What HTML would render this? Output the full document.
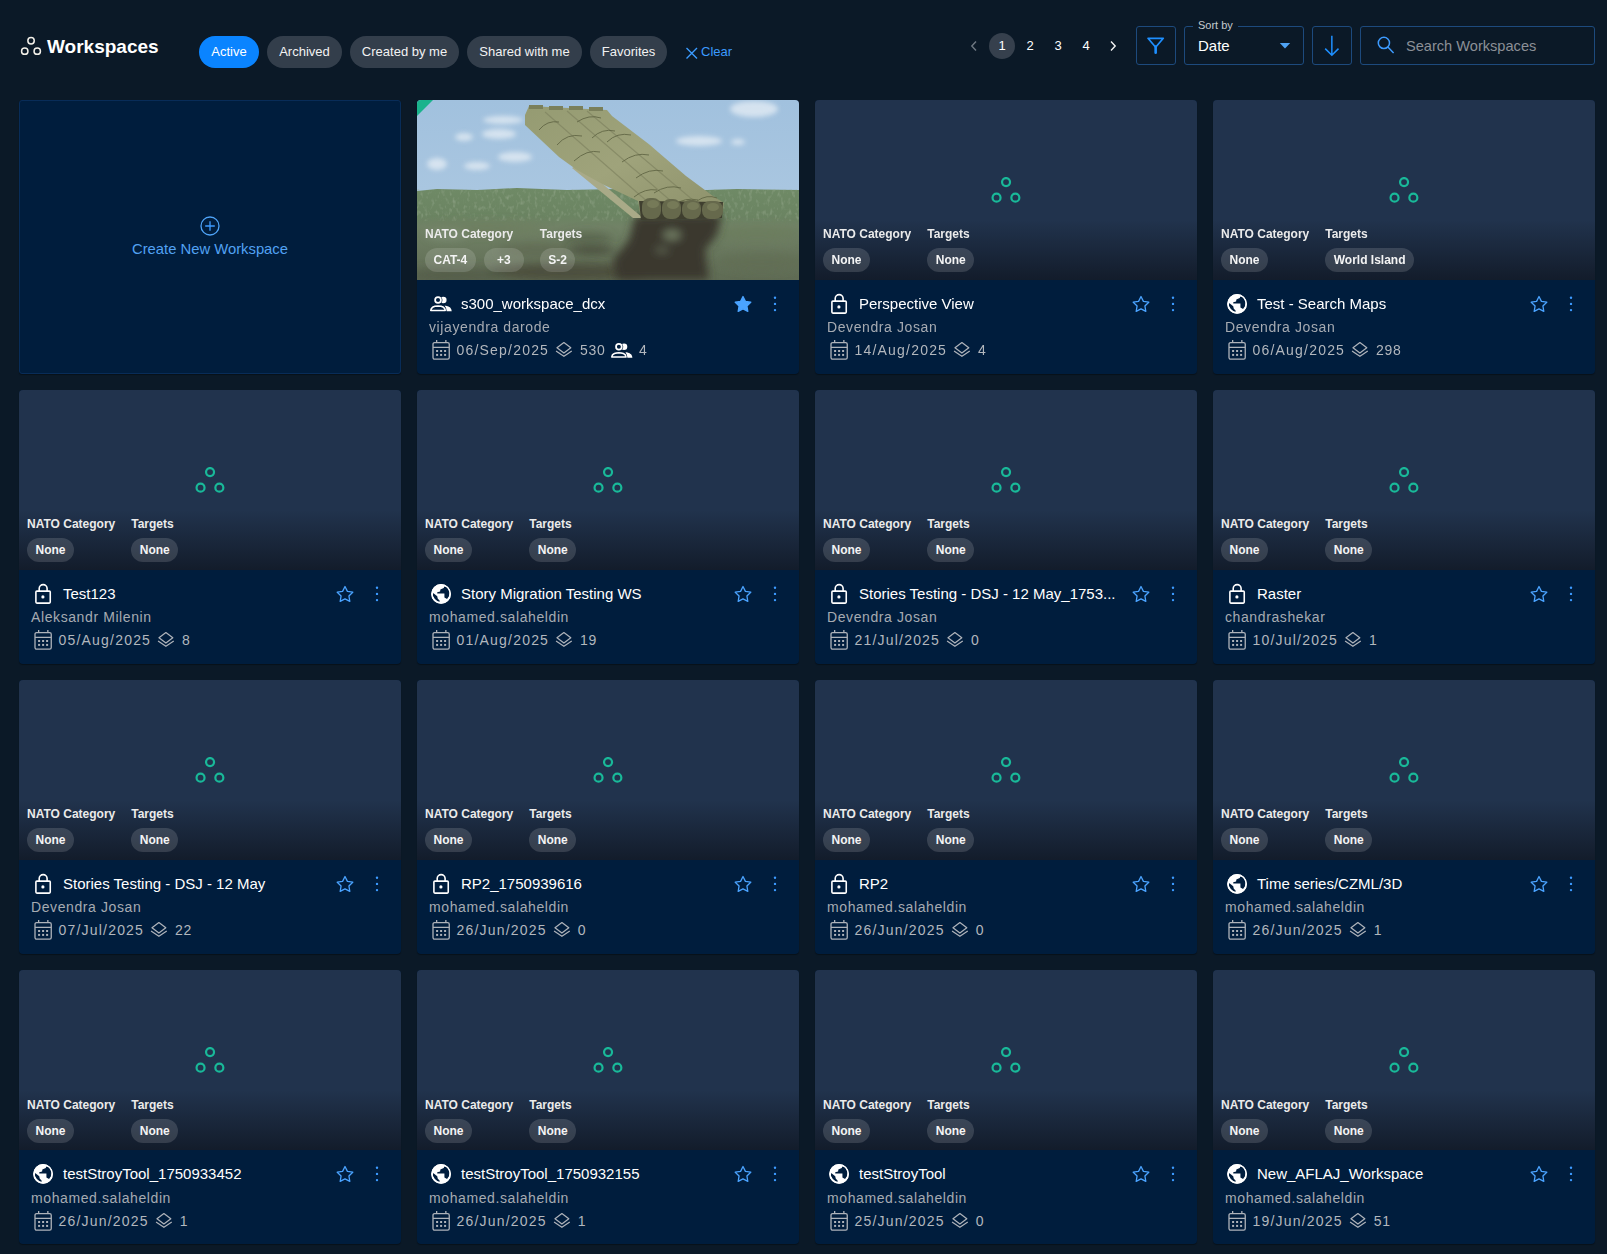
<!DOCTYPE html>
<html><head><meta charset="utf-8"><title>Workspaces</title>
<style>
html,body{margin:0;padding:0;}
body{width:1607px;height:1254px;overflow:hidden;background:#0b1927;font-family:"Liberation Sans",sans-serif;position:relative;color:#fff;}
.abs{position:absolute;}
/* header */
.logo{position:absolute;left:19px;top:35px;}
.h1{position:absolute;left:47px;top:35.5px;font-size:19px;font-weight:700;color:#fff;line-height:22px;}
.fchip{position:absolute;top:36px;height:32px;border-radius:16px;background:#333e4b;color:#f2f2f2;font-size:13px;line-height:32px;text-align:center;}
.fchip.on{background:#0a84ff;color:#fff;}
.clear{position:absolute;left:684px;top:36px;height:32px;line-height:32px;color:#3b9bff;font-size:13px;}
.clear svg{position:absolute;left:1px;top:9.5px;}
.clear span{position:absolute;left:17px;top:0;}
.pg{position:absolute;top:33px;width:26px;height:26px;line-height:26px;text-align:center;font-size:13px;color:#fff;border-radius:13px;}
.pg.cur{background:#36404d;}
.obtn{position:absolute;top:26px;height:39px;border:1px solid #1d4a7d;border-radius:3px;box-sizing:border-box;}
.sortlbl{position:absolute;left:1193px;top:18px;padding:0 5px;background:#0b1927;font-size:11px;color:#c5c9ce;line-height:14px;}
.sortval{position:absolute;left:1198px;top:37px;font-size:15px;color:#fff;line-height:18px;}
.search-ph{position:absolute;left:1406px;top:37px;font-size:14.6px;color:#8c9097;line-height:18px;}
/* cards */
.card{position:absolute;width:382px;height:274px;border-radius:4px;overflow:hidden;background:#001d3d;}
.card.create{box-sizing:border-box;border:1px solid #082c58;background:#001d3d;border-radius:3px;}
.plus{position:absolute;left:179px;top:114px;}
.ctext{position:absolute;left:0;width:380px;top:139px;text-align:center;font-size:14.8px;color:#52a2f3;line-height:18px;}
.img{position:absolute;left:0;top:0;width:382px;height:180px;background:#21334d;overflow:hidden;}
.img .shade{position:absolute;left:0;right:0;bottom:0;height:60px;background:linear-gradient(to bottom,rgba(10,14,22,0) 0%,rgba(10,14,22,0.62) 100%);}
.ph{position:absolute;left:176px;top:77px;}
.ph circle{fill:none;stroke:#19b999;stroke-width:2.2;}
.meta{position:absolute;left:8px;top:126px;display:flex;gap:16px;z-index:2;}
.col{display:flex;flex-direction:column;}
.lbl{font-size:12px;font-weight:700;color:#ebebeb;line-height:17px;height:22px;}
.chips{display:flex;gap:8px;}
.chip{height:24px;line-height:25px;padding:0 8.5px;border-radius:12px;background:rgba(255,255,255,0.14);font-size:12px;font-weight:700;color:#f4f4f4;white-space:nowrap;}
.photo .chip{background:rgba(255,255,255,0.18);}
.info{position:absolute;left:0;top:0;width:382px;height:274px;}
.ic{position:absolute;}
.ttl-ic{left:14px;top:192px;}
.title{position:absolute;left:44px;top:195px;font-size:15px;line-height:18px;color:#fff;white-space:nowrap;}
.star{position:absolute;left:316px;top:194px;}
.kebab{position:absolute;left:355px;top:195px;}
.owner{position:absolute;left:12px;top:218px;font-size:14px;line-height:18px;color:#a6abb2;letter-spacing:0.6px;white-space:nowrap;}
.drow{position:absolute;left:15px;top:241px;height:22px;display:flex;align-items:flex-start;line-height:18px;white-space:nowrap;color:#b2b7bd;font-size:14px;}
.drow .ic{position:static;}
.date{letter-spacing:1.2px;margin-left:4.5px;}
.cal{margin-top:-2px;}
.lay{margin-left:6px;margin-top:-0.75px;}
.cnt{margin-left:7px;letter-spacing:0.6px;}
.ppl2{margin-left:5px;margin-top:0.5px;}
.cnt2{margin-left:5px !important;}

.r4 .meta{top:127px;}
.r4 .owner{top:219px;}
.r4 .drow{top:242px;}
.card{box-shadow:0 1px 1px rgba(0,0,0,0.35);}

</style></head><body>
<svg width="0" height="0" style="position:absolute">
<defs>
<symbol id="cal" viewBox="0 0 20 22"><g fill="none" stroke="#aeb3ba" stroke-width="1.3"><rect x="1.0" y="3.55" width="16.25" height="16.6" rx="1.6"/><path d="M4.65 0.9V3.5M13.85 0.9V3.5M1 8.4H17.25"/></g><g fill="#aeb3ba"><rect x="4.1" y="11" width="2" height="2"/><rect x="8.1" y="11" width="2" height="2"/><rect x="12.1" y="11" width="2" height="2"/><rect x="4.1" y="14.9" width="2" height="2"/><rect x="8.1" y="14.9" width="2" height="2"/><rect x="12.1" y="14.9" width="2" height="2"/></g></symbol>
<symbol id="layers" viewBox="0 0 19 18"><g fill="none" stroke="#aeb3ba" stroke-width="1.3" stroke-linejoin="round"><path d="M2.1 7.6L9.4 2.2L16.7 7.6L9.4 13.3Z"/><path d="M1.1 11.2L9.4 16.7L17.7 11.2"/></g></symbol>
<symbol id="lock" viewBox="0 0 20 22"><g fill="none" stroke="#fff" stroke-width="1.6"><rect x="1.9" y="9.1" width="14.35" height="12" rx="1"/><path d="M5.2 9.1V6.55A3.95 3.95 0 0 1 13.1 6.55V9.1"/></g><circle cx="8.9" cy="14.9" r="1.6" fill="#fff"/></symbol>
<symbol id="globe" viewBox="0 0 1254 1254"><circle cx="630" cy="665" r="410" fill="#fff"/><g fill="#001d3d"><path d="M770 360L740 420L600 480L590 560L470 600L470 650L770 650L770 820L880 880L960 760L980 620L930 460L850 380Z"/><path d="M300 630L470 760L490 860L580 960L560 990L470 960L360 870L290 740Z"/></g><circle cx="630" cy="665" r="385" fill="none" stroke="#fff" stroke-width="55"/></symbol>
<symbol id="people" viewBox="180 300 950 700"><circle cx="745" cy="495" r="130" fill="#fff"/><circle cx="537" cy="495" r="175" fill="#001d3d"/><circle cx="537" cy="495" r="115" fill="none" stroke="#fff" stroke-width="70"/><path d="M850 715Q1070 750 1080 935L880 935Q870 790 800 720Z" fill="#fff"/><path d="M250 905Q265 735 537 730Q810 735 825 905Z" fill="none" stroke="#fff" stroke-width="62" stroke-linejoin="round"/></symbol>
<symbol id="staro" viewBox="0 0 20 20"><path id="starp" d="M10.00 2.50L12.41 7.38L17.80 8.17L13.90 11.97L14.82 17.33L10.00 14.80L5.18 17.33L6.10 11.97L2.20 8.17L7.59 7.38Z" fill="none" stroke="#4aa3ff" stroke-width="1.3" stroke-linejoin="round"/></symbol>
<symbol id="starf" viewBox="0 0 20 20"><path d="M10.00 2.50L12.41 7.38L17.80 8.17L13.90 11.97L14.82 17.33L10.00 14.80L5.18 17.33L6.10 11.97L2.20 8.17L7.59 7.38Z" fill="#4aa3ff" stroke="#4aa3ff" stroke-width="1.3" stroke-linejoin="round"/></symbol>
<symbol id="kebab" viewBox="0 0 6 18"><g fill="#3d9bff"><circle cx="3" cy="2.8" r="1.2"/><circle cx="3" cy="8.9" r="1.2"/><circle cx="3" cy="15.1" r="1.2"/></g></symbol>
</defs></svg>

<svg class="logo" width="24" height="22" viewBox="19 35 24 22"><g fill="none" stroke="#f2efe8" stroke-width="1.5"><circle cx="31.05" cy="40.8" r="3.2"/><circle cx="24.75" cy="51.15" r="3.2"/><circle cx="37.25" cy="51.15" r="3.2"/></g></svg>
<div class="h1">Workspaces</div>
<div class="fchip on" style="left:199px;width:60px">Active</div>
<div class="fchip" style="left:267px;width:75px">Archived</div>
<div class="fchip" style="left:350px;width:109px">Created by me</div>
<div class="fchip" style="left:467px;width:115px">Shared with me</div>
<div class="fchip" style="left:590px;width:77px">Favorites</div>
<div class="clear"><svg width="14" height="14" viewBox="0 0 14 14"><path d="M1.5 2L12 12.5M12 2L1.5 12.5" stroke="#3b9bff" stroke-width="1.4"/></svg><span>Clear</span></div>
<svg class="abs" style="left:968px;top:39px" width="12" height="14" viewBox="0 0 12 14"><path d="M8 2.5L3.8 7L8 11.5" fill="none" stroke="#6f7882" stroke-width="1.4"/></svg>
<div class="pg cur" style="left:989px">1</div>
<div class="pg" style="left:1017px">2</div>
<div class="pg" style="left:1045px">3</div>
<div class="pg" style="left:1073px">4</div>
<svg class="abs" style="left:1107px;top:39px" width="12" height="14" viewBox="0 0 12 14"><path d="M4 2.5L8.2 7L4 11.5" fill="none" stroke="#f4f4f4" stroke-width="1.4"/></svg>
<div class="obtn" style="left:1136px;width:40px"></div>
<svg class="abs" style="left:1146px;top:36px" width="20" height="20" viewBox="0 0 20 20"><path d="M2 2.3H17.3L9.65 11.2Z" fill="none" stroke="#1e8fff" stroke-width="1.7" stroke-linejoin="round"/><path d="M9.65 10.5V16.8" stroke="#1e8fff" stroke-width="2.6" stroke-linecap="round"/></svg>
<div class="obtn" style="left:1184px;width:120px"></div>
<div class="sortlbl">Sort by</div>
<div class="sortval">Date</div>
<svg class="abs" style="left:1278px;top:42px" width="14" height="9" viewBox="0 0 14 9"><path d="M1.8 1.0H12.2L7 6.6Z" fill="#4fa3f5"/></svg>
<div class="obtn" style="left:1312px;width:40px"></div>
<svg class="abs" style="left:1322px;top:34px" width="20" height="24" viewBox="0 0 20 24"><path d="M9.85 1.8V21M3.2 14.6L9.85 21.2L16.5 14.6" fill="none" stroke="#1e8fff" stroke-width="1.5"/></svg>
<div class="obtn" style="left:1360px;width:235px"></div>
<svg class="abs" style="left:1375px;top:35px" width="22" height="22" viewBox="0 0 22 22"><circle cx="8.9" cy="7.9" r="5.6" fill="none" stroke="#3d9bff" stroke-width="1.5"/><path d="M12.9 11.9L18.6 17.9" stroke="#3d9bff" stroke-width="1.5"/></svg>
<div class="search-ph">Search Workspaces</div>

<div class="card create" style="left:19px;top:100px">
<svg class="plus" width="22" height="22" viewBox="0 0 22 22"><circle cx="11" cy="11" r="9.0" fill="none" stroke="#4ea3f7" stroke-width="1.3"/><path d="M11 6.2V15.8M6.2 11H15.8" stroke="#3d9bff" stroke-width="1.3"/></svg>
<div class="ctext">Create New Workspace</div></div><div class="card" style="left:417px;top:100px"><div class="img photo"><svg width="382" height="180" viewBox="0 0 382 180" style="position:absolute;left:0;top:0">
<defs>
<linearGradient id="sky" x1="0" y1="0" x2="0" y2="1"><stop offset="0" stop-color="#a1c1de"/><stop offset="1" stop-color="#b1cbe2"/></linearGradient>
<linearGradient id="grd" x1="0" y1="0" x2="0" y2="1"><stop offset="0" stop-color="#6f8a66"/><stop offset="0.3" stop-color="#6b8462"/><stop offset="0.42" stop-color="#718266"/><stop offset="1" stop-color="#5f6b54"/></linearGradient>
<linearGradient id="tube" x1="0" y1="0" x2="1" y2="1"><stop offset="0" stop-color="#959b72"/><stop offset="0.5" stop-color="#9fa37b"/><stop offset="1" stop-color="#8c906a"/></linearGradient>
<filter id="bl" x="-30%" y="-30%" width="160%" height="160%"><feGaussianBlur stdDeviation="2.5"/></filter>
<filter id="bl4" x="-30%" y="-30%" width="160%" height="160%"><feGaussianBlur stdDeviation="4"/></filter>
<filter id="tex" x="0" y="0" width="100%" height="100%"><feTurbulence type="fractalNoise" baseFrequency="0.28 0.18" numOctaves="2" seed="5" result="n"/><feColorMatrix in="n" type="matrix" values="0 0 0 0 0.33  0 0 0 0 0.42  0 0 0 0 0.29  0 0 0 -2.2 1.05"/><feComposite in2="SourceGraphic" operator="in"/></filter>
</defs>
<rect width="382" height="180" fill="url(#sky)"/>
<g fill="#e6eef5" opacity="0.75" filter="url(#bl)">
<ellipse cx="86" cy="20" rx="20" ry="4"/>
<ellipse cx="82" cy="34" rx="17" ry="5"/>
<ellipse cx="47" cy="37" rx="9" ry="4"/>
<ellipse cx="20" cy="64" rx="10" ry="6"/>
<ellipse cx="60" cy="66" rx="13" ry="4"/>
<ellipse cx="98" cy="57" rx="17" ry="5"/>
<ellipse cx="337" cy="9" rx="24" ry="8"/>
<ellipse cx="282" cy="41" rx="23" ry="5"/>
<ellipse cx="321" cy="42" rx="7" ry="3"/>
</g>
<path d="M0 91L20 89L60 90L100 88L150 90L200 89L260 91L320 89L382 90V180H0Z" fill="url(#grd)"/>
<rect x="0" y="89" width="382" height="32" fill="#000" filter="url(#tex)" opacity="0.65"/>
<g filter="url(#bl4)">
<ellipse cx="70" cy="128" rx="60" ry="6" fill="#6c7d5e" opacity="0.7"/>
<ellipse cx="340" cy="133" rx="45" ry="7" fill="#6b7c5d" opacity="0.7"/>
<ellipse cx="345" cy="162" rx="45" ry="9" fill="#5f6c53" opacity="0.6"/>
<ellipse cx="150" cy="172" rx="80" ry="9" fill="#47493a" opacity="0.8"/>
<ellipse cx="120" cy="150" rx="40" ry="7" fill="#5e6650" opacity="0.6"/>
<ellipse cx="40" cy="175" rx="50" ry="8" fill="#4f5643" opacity="0.6"/>
<ellipse cx="30" cy="135" rx="20" ry="5" fill="#8a9a84" opacity="0.5"/>
<ellipse cx="170" cy="138" rx="25" ry="6" fill="#55604a" opacity="0.7"/>
</g>
<g filter="url(#bl4)">
<path d="M218 116L305 114L300 135L288 150L292 180L200 180L196 160L212 140Z" fill="#3a392d"/>
<ellipse cx="255" cy="135" rx="9" ry="5" fill="#6f7a62"/>
<ellipse cx="245" cy="150" rx="7" ry="3" fill="#5c6250"/>
<ellipse cx="175" cy="150" rx="22" ry="5" fill="#45473a" opacity="0.8"/>
</g>
<path d="M155 68L216 118L226 118L162 64Z" fill="#a9aa88"/>
<path d="M108 15L112 6L190 10L195 16L233 45L241 52L269 76L296 96L307 103L305 114L299 117L224 118L221 101L187 85L160 70L142 57L108 25Z" fill="url(#tube)"/>
<g fill="none" stroke="#7f8360" stroke-width="1.2" opacity="0.7"><path d="M128 12L240 110"/><path d="M150 11L262 108"/><path d="M170 11L283 106"/></g>
<g fill="none" stroke="#5f6443" stroke-width="1" opacity="0.85">
<path d="M122 30Q130 20 142 22"/><path d="M140 45Q150 33 165 36"/><path d="M157 61Q170 49 183 52"/><path d="M160 22Q172 14 184 18"/><path d="M190 42Q200 32 214 35"/><path d="M175 38Q185 28 198 31"/><path d="M205 62Q218 52 232 55"/><path d="M219 78Q232 68 246 71"/><path d="M237 93Q250 84 264 88"/><path d="M217 97Q228 88 240 90"/><path d="M257 105Q268 97 281 100"/><path d="M280 101Q290 94 300 98"/>
</g>
<path d="M222 101L306 102L305 118L224 120Z" fill="#3f3f2f"/>
<g fill="#66694c"><rect x="225" y="98" width="19" height="21" rx="8"/><rect x="245" y="99" width="19" height="20" rx="8"/><rect x="265" y="100" width="19" height="19" rx="8"/><rect x="285" y="101" width="21" height="18" rx="8"/></g>
<g fill="#7b7f5c" opacity="0.8"><ellipse cx="236" cy="104" rx="6" ry="4"/><ellipse cx="256" cy="105" rx="6" ry="4"/><ellipse cx="276" cy="106" rx="6" ry="4"/><ellipse cx="296" cy="107" rx="6" ry="4"/></g>
<g fill="#7a7f5a"><rect x="112" y="5" width="14" height="4"/><rect x="132" y="6" width="14" height="4"/><rect x="152" y="6" width="14" height="4"/><rect x="172" y="7" width="14" height="4"/></g>
<path d="M0 0H16L0 16Z" fill="#1ab38c"/>
</svg>
</div><div class="meta"><div class="col"><div class="lbl">NATO Category</div><div class="chips"><span class="chip">CAT-4</span><span class="chip" style="min-width:23px;text-align:center">+3</span></div></div><div class="col"><div class="lbl">Targets</div><div class="chips"><span class="chip">S-2</span></div></div></div>
<div class="info"><svg class="ic" style="left:12px;top:195px" width="24" height="18" viewBox="160.7 281.1 964 723"><use href="#people" x="160.7" y="281.1" width="964" height="723"/></svg><div class="title">s300_workspace_dcx</div>
<svg class="star" width="20" height="20"><use href="#starf"/></svg><svg class="kebab" width="6" height="18"><use href="#kebab"/></svg>
<div class="owner">vijayendra darode</div>
<div class="drow"><svg class="ic cal" width="20" height="22"><use href="#cal"/></svg><span class="date">06/Sep/2025</span><svg class="ic lay" width="18" height="18"><use href="#layers"/></svg><span class="cnt">530</span><svg class="ic ppl2" width="23.65" height="17.42"><use href="#people"/></svg><span class="cnt cnt2">4</span></div>
</div></div><div class="card" style="left:815px;top:100px"><div class="img"><svg class="ph" width="30" height="28" viewBox="0 0 30 28"><circle cx="15.05" cy="5.05" r="4" /><circle cx="5.55" cy="20.65" r="4"/><circle cx="24.35" cy="20.65" r="4"/></svg><div class="shade"></div></div><div class="meta"><div class="col"><div class="lbl">NATO Category</div><div class="chips"><span class="chip">None</span></div></div><div class="col"><div class="lbl">Targets</div><div class="chips"><span class="chip">None</span></div></div></div>
<div class="info"><svg class="ic" style="left:15px;top:192px" width="20" height="22"><use href="#lock"/></svg><div class="title">Perspective View</div>
<svg class="star" width="20" height="20"><use href="#staro"/></svg><svg class="kebab" width="6" height="18"><use href="#kebab"/></svg>
<div class="owner">Devendra Josan</div>
<div class="drow"><svg class="ic cal" width="20" height="22"><use href="#cal"/></svg><span class="date">14/Aug/2025</span><svg class="ic lay" width="18" height="18"><use href="#layers"/></svg><span class="cnt">4</span></div>
</div></div><div class="card" style="left:1213px;top:100px"><div class="img"><svg class="ph" width="30" height="28" viewBox="0 0 30 28"><circle cx="15.05" cy="5.05" r="4" /><circle cx="5.55" cy="20.65" r="4"/><circle cx="24.35" cy="20.65" r="4"/></svg><div class="shade"></div></div><div class="meta"><div class="col"><div class="lbl">NATO Category</div><div class="chips"><span class="chip">None</span></div></div><div class="col"><div class="lbl">Targets</div><div class="chips"><span class="chip">World Island</span></div></div></div>
<div class="info"><svg class="ic" style="left:9px;top:188px" width="30" height="30"><use href="#globe"/></svg><div class="title">Test - Search Maps</div>
<svg class="star" width="20" height="20"><use href="#staro"/></svg><svg class="kebab" width="6" height="18"><use href="#kebab"/></svg>
<div class="owner">Devendra Josan</div>
<div class="drow"><svg class="ic cal" width="20" height="22"><use href="#cal"/></svg><span class="date">06/Aug/2025</span><svg class="ic lay" width="18" height="18"><use href="#layers"/></svg><span class="cnt">298</span></div>
</div></div><div class="card" style="left:19px;top:390px"><div class="img"><svg class="ph" width="30" height="28" viewBox="0 0 30 28"><circle cx="15.05" cy="5.05" r="4" /><circle cx="5.55" cy="20.65" r="4"/><circle cx="24.35" cy="20.65" r="4"/></svg><div class="shade"></div></div><div class="meta"><div class="col"><div class="lbl">NATO Category</div><div class="chips"><span class="chip">None</span></div></div><div class="col"><div class="lbl">Targets</div><div class="chips"><span class="chip">None</span></div></div></div>
<div class="info"><svg class="ic" style="left:15px;top:192px" width="20" height="22"><use href="#lock"/></svg><div class="title">Test123</div>
<svg class="star" width="20" height="20"><use href="#staro"/></svg><svg class="kebab" width="6" height="18"><use href="#kebab"/></svg>
<div class="owner">Aleksandr Milenin</div>
<div class="drow"><svg class="ic cal" width="20" height="22"><use href="#cal"/></svg><span class="date">05/Aug/2025</span><svg class="ic lay" width="18" height="18"><use href="#layers"/></svg><span class="cnt">8</span></div>
</div></div><div class="card" style="left:417px;top:390px"><div class="img"><svg class="ph" width="30" height="28" viewBox="0 0 30 28"><circle cx="15.05" cy="5.05" r="4" /><circle cx="5.55" cy="20.65" r="4"/><circle cx="24.35" cy="20.65" r="4"/></svg><div class="shade"></div></div><div class="meta"><div class="col"><div class="lbl">NATO Category</div><div class="chips"><span class="chip">None</span></div></div><div class="col"><div class="lbl">Targets</div><div class="chips"><span class="chip">None</span></div></div></div>
<div class="info"><svg class="ic" style="left:9px;top:188px" width="30" height="30"><use href="#globe"/></svg><div class="title">Story Migration Testing WS</div>
<svg class="star" width="20" height="20"><use href="#staro"/></svg><svg class="kebab" width="6" height="18"><use href="#kebab"/></svg>
<div class="owner">mohamed.salaheldin</div>
<div class="drow"><svg class="ic cal" width="20" height="22"><use href="#cal"/></svg><span class="date">01/Aug/2025</span><svg class="ic lay" width="18" height="18"><use href="#layers"/></svg><span class="cnt">19</span></div>
</div></div><div class="card" style="left:815px;top:390px"><div class="img"><svg class="ph" width="30" height="28" viewBox="0 0 30 28"><circle cx="15.05" cy="5.05" r="4" /><circle cx="5.55" cy="20.65" r="4"/><circle cx="24.35" cy="20.65" r="4"/></svg><div class="shade"></div></div><div class="meta"><div class="col"><div class="lbl">NATO Category</div><div class="chips"><span class="chip">None</span></div></div><div class="col"><div class="lbl">Targets</div><div class="chips"><span class="chip">None</span></div></div></div>
<div class="info"><svg class="ic" style="left:15px;top:192px" width="20" height="22"><use href="#lock"/></svg><div class="title">Stories Testing - DSJ - 12 May_1753...</div>
<svg class="star" width="20" height="20"><use href="#staro"/></svg><svg class="kebab" width="6" height="18"><use href="#kebab"/></svg>
<div class="owner">Devendra Josan</div>
<div class="drow"><svg class="ic cal" width="20" height="22"><use href="#cal"/></svg><span class="date">21/Jul/2025</span><svg class="ic lay" width="18" height="18"><use href="#layers"/></svg><span class="cnt">0</span></div>
</div></div><div class="card" style="left:1213px;top:390px"><div class="img"><svg class="ph" width="30" height="28" viewBox="0 0 30 28"><circle cx="15.05" cy="5.05" r="4" /><circle cx="5.55" cy="20.65" r="4"/><circle cx="24.35" cy="20.65" r="4"/></svg><div class="shade"></div></div><div class="meta"><div class="col"><div class="lbl">NATO Category</div><div class="chips"><span class="chip">None</span></div></div><div class="col"><div class="lbl">Targets</div><div class="chips"><span class="chip">None</span></div></div></div>
<div class="info"><svg class="ic" style="left:15px;top:192px" width="20" height="22"><use href="#lock"/></svg><div class="title">Raster</div>
<svg class="star" width="20" height="20"><use href="#staro"/></svg><svg class="kebab" width="6" height="18"><use href="#kebab"/></svg>
<div class="owner">chandrashekar</div>
<div class="drow"><svg class="ic cal" width="20" height="22"><use href="#cal"/></svg><span class="date">10/Jul/2025</span><svg class="ic lay" width="18" height="18"><use href="#layers"/></svg><span class="cnt">1</span></div>
</div></div><div class="card" style="left:19px;top:680px"><div class="img"><svg class="ph" width="30" height="28" viewBox="0 0 30 28"><circle cx="15.05" cy="5.05" r="4" /><circle cx="5.55" cy="20.65" r="4"/><circle cx="24.35" cy="20.65" r="4"/></svg><div class="shade"></div></div><div class="meta"><div class="col"><div class="lbl">NATO Category</div><div class="chips"><span class="chip">None</span></div></div><div class="col"><div class="lbl">Targets</div><div class="chips"><span class="chip">None</span></div></div></div>
<div class="info"><svg class="ic" style="left:15px;top:192px" width="20" height="22"><use href="#lock"/></svg><div class="title">Stories Testing - DSJ - 12 May</div>
<svg class="star" width="20" height="20"><use href="#staro"/></svg><svg class="kebab" width="6" height="18"><use href="#kebab"/></svg>
<div class="owner">Devendra Josan</div>
<div class="drow"><svg class="ic cal" width="20" height="22"><use href="#cal"/></svg><span class="date">07/Jul/2025</span><svg class="ic lay" width="18" height="18"><use href="#layers"/></svg><span class="cnt">22</span></div>
</div></div><div class="card" style="left:417px;top:680px"><div class="img"><svg class="ph" width="30" height="28" viewBox="0 0 30 28"><circle cx="15.05" cy="5.05" r="4" /><circle cx="5.55" cy="20.65" r="4"/><circle cx="24.35" cy="20.65" r="4"/></svg><div class="shade"></div></div><div class="meta"><div class="col"><div class="lbl">NATO Category</div><div class="chips"><span class="chip">None</span></div></div><div class="col"><div class="lbl">Targets</div><div class="chips"><span class="chip">None</span></div></div></div>
<div class="info"><svg class="ic" style="left:15px;top:192px" width="20" height="22"><use href="#lock"/></svg><div class="title">RP2_1750939616</div>
<svg class="star" width="20" height="20"><use href="#staro"/></svg><svg class="kebab" width="6" height="18"><use href="#kebab"/></svg>
<div class="owner">mohamed.salaheldin</div>
<div class="drow"><svg class="ic cal" width="20" height="22"><use href="#cal"/></svg><span class="date">26/Jun/2025</span><svg class="ic lay" width="18" height="18"><use href="#layers"/></svg><span class="cnt">0</span></div>
</div></div><div class="card" style="left:815px;top:680px"><div class="img"><svg class="ph" width="30" height="28" viewBox="0 0 30 28"><circle cx="15.05" cy="5.05" r="4" /><circle cx="5.55" cy="20.65" r="4"/><circle cx="24.35" cy="20.65" r="4"/></svg><div class="shade"></div></div><div class="meta"><div class="col"><div class="lbl">NATO Category</div><div class="chips"><span class="chip">None</span></div></div><div class="col"><div class="lbl">Targets</div><div class="chips"><span class="chip">None</span></div></div></div>
<div class="info"><svg class="ic" style="left:15px;top:192px" width="20" height="22"><use href="#lock"/></svg><div class="title">RP2</div>
<svg class="star" width="20" height="20"><use href="#staro"/></svg><svg class="kebab" width="6" height="18"><use href="#kebab"/></svg>
<div class="owner">mohamed.salaheldin</div>
<div class="drow"><svg class="ic cal" width="20" height="22"><use href="#cal"/></svg><span class="date">26/Jun/2025</span><svg class="ic lay" width="18" height="18"><use href="#layers"/></svg><span class="cnt">0</span></div>
</div></div><div class="card" style="left:1213px;top:680px"><div class="img"><svg class="ph" width="30" height="28" viewBox="0 0 30 28"><circle cx="15.05" cy="5.05" r="4" /><circle cx="5.55" cy="20.65" r="4"/><circle cx="24.35" cy="20.65" r="4"/></svg><div class="shade"></div></div><div class="meta"><div class="col"><div class="lbl">NATO Category</div><div class="chips"><span class="chip">None</span></div></div><div class="col"><div class="lbl">Targets</div><div class="chips"><span class="chip">None</span></div></div></div>
<div class="info"><svg class="ic" style="left:9px;top:188px" width="30" height="30"><use href="#globe"/></svg><div class="title">Time series/CZML/3D</div>
<svg class="star" width="20" height="20"><use href="#staro"/></svg><svg class="kebab" width="6" height="18"><use href="#kebab"/></svg>
<div class="owner">mohamed.salaheldin</div>
<div class="drow"><svg class="ic cal" width="20" height="22"><use href="#cal"/></svg><span class="date">26/Jun/2025</span><svg class="ic lay" width="18" height="18"><use href="#layers"/></svg><span class="cnt">1</span></div>
</div></div><div class="card r4" style="left:19px;top:970px"><div class="img"><svg class="ph" width="30" height="28" viewBox="0 0 30 28"><circle cx="15.05" cy="5.05" r="4" /><circle cx="5.55" cy="20.65" r="4"/><circle cx="24.35" cy="20.65" r="4"/></svg><div class="shade"></div></div><div class="meta"><div class="col"><div class="lbl">NATO Category</div><div class="chips"><span class="chip">None</span></div></div><div class="col"><div class="lbl">Targets</div><div class="chips"><span class="chip">None</span></div></div></div>
<div class="info"><svg class="ic" style="left:9px;top:188px" width="30" height="30"><use href="#globe"/></svg><div class="title">testStroyTool_1750933452</div>
<svg class="star" width="20" height="20"><use href="#staro"/></svg><svg class="kebab" width="6" height="18"><use href="#kebab"/></svg>
<div class="owner">mohamed.salaheldin</div>
<div class="drow"><svg class="ic cal" width="20" height="22"><use href="#cal"/></svg><span class="date">26/Jun/2025</span><svg class="ic lay" width="18" height="18"><use href="#layers"/></svg><span class="cnt">1</span></div>
</div></div><div class="card r4" style="left:417px;top:970px"><div class="img"><svg class="ph" width="30" height="28" viewBox="0 0 30 28"><circle cx="15.05" cy="5.05" r="4" /><circle cx="5.55" cy="20.65" r="4"/><circle cx="24.35" cy="20.65" r="4"/></svg><div class="shade"></div></div><div class="meta"><div class="col"><div class="lbl">NATO Category</div><div class="chips"><span class="chip">None</span></div></div><div class="col"><div class="lbl">Targets</div><div class="chips"><span class="chip">None</span></div></div></div>
<div class="info"><svg class="ic" style="left:9px;top:188px" width="30" height="30"><use href="#globe"/></svg><div class="title">testStroyTool_1750932155</div>
<svg class="star" width="20" height="20"><use href="#staro"/></svg><svg class="kebab" width="6" height="18"><use href="#kebab"/></svg>
<div class="owner">mohamed.salaheldin</div>
<div class="drow"><svg class="ic cal" width="20" height="22"><use href="#cal"/></svg><span class="date">26/Jun/2025</span><svg class="ic lay" width="18" height="18"><use href="#layers"/></svg><span class="cnt">1</span></div>
</div></div><div class="card r4" style="left:815px;top:970px"><div class="img"><svg class="ph" width="30" height="28" viewBox="0 0 30 28"><circle cx="15.05" cy="5.05" r="4" /><circle cx="5.55" cy="20.65" r="4"/><circle cx="24.35" cy="20.65" r="4"/></svg><div class="shade"></div></div><div class="meta"><div class="col"><div class="lbl">NATO Category</div><div class="chips"><span class="chip">None</span></div></div><div class="col"><div class="lbl">Targets</div><div class="chips"><span class="chip">None</span></div></div></div>
<div class="info"><svg class="ic" style="left:9px;top:188px" width="30" height="30"><use href="#globe"/></svg><div class="title">testStroyTool</div>
<svg class="star" width="20" height="20"><use href="#staro"/></svg><svg class="kebab" width="6" height="18"><use href="#kebab"/></svg>
<div class="owner">mohamed.salaheldin</div>
<div class="drow"><svg class="ic cal" width="20" height="22"><use href="#cal"/></svg><span class="date">25/Jun/2025</span><svg class="ic lay" width="18" height="18"><use href="#layers"/></svg><span class="cnt">0</span></div>
</div></div><div class="card r4" style="left:1213px;top:970px"><div class="img"><svg class="ph" width="30" height="28" viewBox="0 0 30 28"><circle cx="15.05" cy="5.05" r="4" /><circle cx="5.55" cy="20.65" r="4"/><circle cx="24.35" cy="20.65" r="4"/></svg><div class="shade"></div></div><div class="meta"><div class="col"><div class="lbl">NATO Category</div><div class="chips"><span class="chip">None</span></div></div><div class="col"><div class="lbl">Targets</div><div class="chips"><span class="chip">None</span></div></div></div>
<div class="info"><svg class="ic" style="left:9px;top:188px" width="30" height="30"><use href="#globe"/></svg><div class="title">New_AFLAJ_Workspace</div>
<svg class="star" width="20" height="20"><use href="#staro"/></svg><svg class="kebab" width="6" height="18"><use href="#kebab"/></svg>
<div class="owner">mohamed.salaheldin</div>
<div class="drow"><svg class="ic cal" width="20" height="22"><use href="#cal"/></svg><span class="date">19/Jun/2025</span><svg class="ic lay" width="18" height="18"><use href="#layers"/></svg><span class="cnt">51</span></div>
</div></div>
</body></html>
